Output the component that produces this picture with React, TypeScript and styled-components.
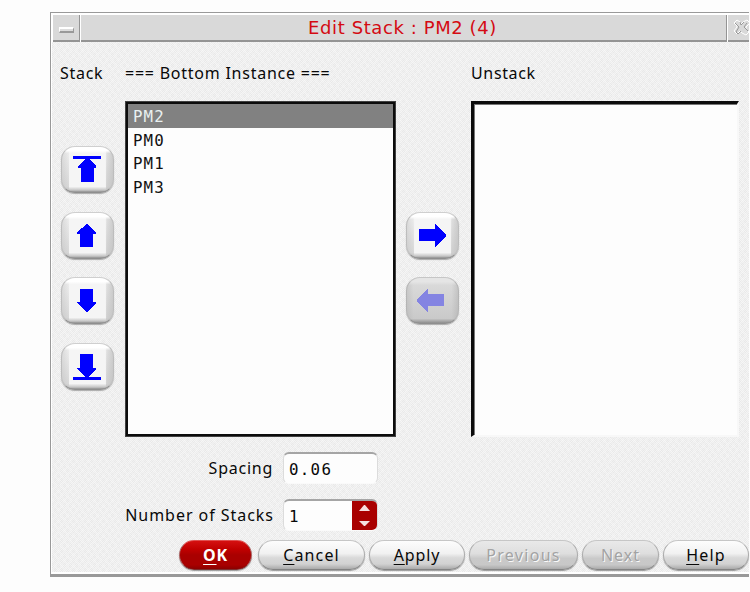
import React from 'react';
import styled, { createGlobalStyle, css } from 'styled-components';

const Global = createGlobalStyle`
  * { box-sizing: border-box; }
  html, body { margin: 0; background: #fdfdfd; overflow: hidden; }
  body { width: 750px; height: 592px; }
  button, input { font: inherit; color: inherit; margin: 0; padding: 0; }
`;

const grain = css`
  background-color: #efefef;
  background-image:
    repeating-conic-gradient(#fafafa44 0 25%, transparent 0 50%),
    repeating-conic-gradient(#e6e6e644 0 25%, transparent 0 50%),
    repeating-conic-gradient(#e9e9e9 0 25%, #f5f5f5 0 50%);
  background-size: 6px 10px, 10px 6px, 2px 2px;
`;

const Page = styled.div`
  padding: 12px 1px 0 50px;
  font: 16px/20px 'Noto Sans', 'Open Sans', sans-serif;
  color: #080808;
`;

const Window = styled.section`
  height: 565px;
  display: flex;
  flex-direction: column;
  border: solid #999;
  border-width: 1px 0 3px 1px;
  box-shadow: inset 1px 1px 0 #fff, inset 0 -2px 0 #fff;
  ${grain}
`;

const TitleBar = styled.header`
  height: 29px;
  padding: 2px 0 0 2px;
  display: grid;
  grid-template-columns: 27px 1fr 21px;
  gap: 1px;
  background: #fff;
`;

const TitleCell = styled.div<{ $last?: boolean }>`
  display: flex;
  align-items: center;
  justify-content: ${p => (p.$last ? 'flex-start' : 'center')};
  overflow: hidden;
  background: #d9d9d9;
  border: solid #949494;
  border-width: 0 ${p => (p.$last ? 0 : 1)}px 2px 0;
`;

const Title = styled.h1`
  margin: 0;
  padding: 0 2px 0 0;
  font: 18px/24px 'DejaVu Sans', sans-serif;
  letter-spacing: 0.59px;
  white-space: pre;
  color: #d40a12;
`;

const MenuMark = styled.span`
  width: 15px;
  height: 6px;
  margin-top: 4px;
  background: #dcdcdc;
  border: solid;
  border-width: 2px 1px;
  border-color: #fff #999 #999 #fff;
`;

const CloseMark = styled.svg`
  flex: none;
  width: 18px;
  height: 17px;
  margin-left: 4px;
`;

const Content = styled.main`
  height: 396px;
  padding: 21px 0 0 9px;
  display: grid;
  grid-template-columns: 65px 271px 75px 268px;
  grid-template-rows: 38px 336px;
`;

const Caption = styled.div<{ $track?: number }>`
  line-height: 20px;
  white-space: pre;
  letter-spacing: ${p => p.$track ?? 0.7}px;
`;

const ButtonColumn = styled.div<{ $top: number; $left: number }>`
  padding: ${p => p.$top}px 0 0 ${p => p.$left}px;
  display: flex;
  flex-direction: column;
  gap: 18.5px;
`;

const ArrowButton = styled.button`
  width: 53px;
  height: 47px;
  flex: none;
  display: block;
  border: 1px solid #c2c2c2;
  border-color: #cfcfcf #bdbdbd #8e8e8e;
  border-radius: 14px;
  background: linear-gradient(#fff 0 8%, transparent 14% 88%, #c4c4c4 96%, #8e8e8e),
    linear-gradient(#fff0, #bbb8) left / 7px 100% no-repeat,
    linear-gradient(#fff0, #bbb8) right / 7px 100% no-repeat,
    linear-gradient(90deg, #dedede, #eee 12%, #f5f5f5 15% 85%, #e2e2e2 88%, #cecece);
  box-shadow: 0 1px 1px #aaa;

  &:disabled {
    border-color: #c6c6c6 #b5b5b5 #8e8e8e;
    background: linear-gradient(#e5e5e5 0 8%, #d8d8d855 16%, #bbbbbb88 90%, #8e8e8e),
      linear-gradient(90deg, #c2c2c2, #dadada 13% 87%, #bcbcbc);
  }
`;

const Glyph = styled.svg`
  display: block;
  width: 51px;
  height: 45px;
`;

const ListBox = styled.ul<{ $open?: boolean }>`
  margin: 0;
  padding: 0;
  list-style: none;
  background: #fdfdfd;
  border: 3px solid #0c0c0c;
  outline: 1px solid #66666699;
  outline-offset: -1px;
  ${p =>
    p.$open &&
    css`
      border-width: 3px 2px 2px 3px;
      border-right-color: #f8f8f8;
      border-bottom-color: #f8f8f8;
      outline: 0;
      box-shadow: inset 1px 1px 0 #777;
    `}
`;

const ListRow = styled.li<{ $selected?: boolean }>`
  height: 23.5px;
  padding: 3px 0 0 5px;
  font: 15.8px/20px 'DejaVu Sans Mono', monospace;
  letter-spacing: 1.1px;
  color: ${p => (p.$selected ? '#e9f0f0' : '#111')};
  background: ${p => (p.$selected ? '#818181' : 'transparent')};
`;

const Fields = styled.div`
  padding: 14px 0 0 73px;
  height: 101px;
  display: grid;
  grid-template-columns: 150px 95px;
  grid-template-rows: 32px 32px;
  row-gap: 15px;
  column-gap: 9px;
  align-items: center;
`;

const FieldName = styled.label<{ $track: number; $inset?: number }>`
  text-align: right;
  white-space: pre;
  padding-right: ${p => p.$inset ?? 0}px;
  letter-spacing: ${p => p.$track}px;
`;

const FieldBox = styled.div`
  height: 32px;
  display: flex;
  overflow: hidden;
  background: #fdfdfd;
  border: 1px solid #dcdcdc;
  border-top: 2px solid #a5a5a5;
  border-bottom-color: #fafafa;
  border-radius: 6px;
`;

const FieldInput = styled.input`
  flex: 1;
  min-width: 0;
  padding: 1px 0 0 5px;
  border: 0;
  outline: 0;
  background: transparent;
  font: 15.8px 'DejaVu Sans Mono', monospace;
  letter-spacing: 1.3px;
`;

const Stepper = styled.button`
  width: 25px;
  border: 0;
  background: #a90000;
`;

const StepperIcon = styled.svg`
  display: block;
  width: 25px;
  height: 29px;
`;

const Footer = styled.footer`
  padding: 1px 0 0 128px;
  display: flex;
`;

const PillButton = styled.button<{ $w: number; $gap?: number; $track: number; $primary?: boolean }>`
  width: ${p => p.$w}px;
  height: 30px;
  flex: none;
  margin-right: ${p => p.$gap ?? 4}px;
  padding-bottom: 1px;
  text-align: center;
  border: 1px solid;
  border-color: #c6c6c6 #aaa #838383;
  border-radius: 15px;
  background: linear-gradient(#fdfdfd, #f1f1f1 45%, #d9d9d9 60%, #d2d2d2 82%, #aaa);
  box-shadow: 0 1px 1px #999;
  letter-spacing: ${p => p.$track}px;

  &:disabled {
    color: #a3a3a3;
    text-shadow: 1px 1px 0 #fafafa;
    background: linear-gradient(#e9e9e9, #dedede 45%, #c9c9c9 62%, #c8c8c8 85%, #aaa);
  }

  ${p =>
    p.$primary &&
    css`
      color: #fff;
      font-weight: 700;
      border-color: #e05050 #a86060 #7c3030;
      background: linear-gradient(#d41010, #c00000 30%, #a90000 50% 85%, #8b0000);
    `}
`;

const Mnemonic = styled.span`
  text-decoration: underline;
  text-decoration-thickness: 1px;
  text-underline-offset: 3px;
  text-decoration-skip-ink: none;
`;

const arrows = {
  top: 'M12 9h28v3H28l7 7v2H33V35H20V21H17v-2l7-7H12z',
  up: 'M26 11l9 8v2H32V34H19V21H16v-2z',
  down: 'M19 11H32V24H35v1l-9 9h-1l-9-9v-1H19z',
  bottom: 'M19 10H32V24H35v1l-8 8H40v3H12v-3H25l-9-8v-1H19z',
  right: 'M13 16H29V11h1L40 22v1L30 34H29V28H13z',
  left: 'M38 16H22V11H21L11 22v1L21 34h1V28H38z',
};

function Arrow({ kind, disabled }: { kind: keyof typeof arrows; disabled?: boolean }) {
  return (
    <ArrowButton disabled={disabled} aria-label={kind}>
      <Glyph viewBox="1 0 51 45" shapeRendering="crispEdges">
        <path d={arrows[kind]} fill={disabled ? '#8484e2' : '#0000fe'} />
      </Glyph>
    </ArrowButton>
  );
}

const instances = ['PM2', 'PM0', 'PM1', 'PM3'];

export default function App() {
  return (
    <Page>
      <Global />
      <Window>
        <TitleBar>
          <TitleCell><MenuMark /></TitleCell>
          <TitleCell><Title>Edit Stack : PM2 (4)</Title></TitleCell>
          <TitleCell $last>
            <CloseMark viewBox="0 0 18 17" fill="none">
              <path d="M5 1l3 2 1 2 2-2 4-2 3 3-4 4v2l3 3-3 3-4-2-2-2-3 3-3-3 3-4V7L2 4z" stroke="#fff" />
              <path d="M3 4l4 4-3 5 2 2 3-3M8 3l1 3 3-3M15 4l-3 4 4 4" stroke="#999" />
            </CloseMark>
          </TitleCell>
        </TitleBar>
        <Content>
          <Caption>Stack</Caption>
          <Caption $track={0.76}>=== Bottom Instance ===</Caption>
          <span />
          <Caption $track={0.65}>Unstack</Caption>
          <ButtonColumn $top={45} $left={0.5}>
            <Arrow kind="top" />
            <Arrow kind="up" />
            <Arrow kind="down" />
            <Arrow kind="bottom" />
          </ButtonColumn>
          <ListBox>
            {instances.map((name, i) => (
              <ListRow key={name} $selected={i === 0}>{name}</ListRow>
            ))}
          </ListBox>
          <ButtonColumn $top={110.5} $left={10}>
            <Arrow kind="right" />
            <Arrow kind="left" disabled />
          </ButtonColumn>
          <ListBox $open />
        </Content>
        <Fields>
          <FieldName $track={0.75} $inset={1}>Spacing</FieldName>
          <FieldBox><FieldInput defaultValue="0.06" /></FieldBox>
          <FieldName $track={0.96}>Number of Stacks</FieldName>
          <FieldBox>
            <FieldInput defaultValue="1" />
            <Stepper aria-label="Step">
              <StepperIcon viewBox="0 0 25 29">
                <path d="M7 10l5-6h1l5 6z" fill="#f5dede" />
                <path d="M7 20h11l-5 5h-1z" fill="#f5dede" />
              </StepperIcon>
            </Stepper>
          </FieldBox>
        </Fields>
        <Footer>
          <PillButton $w={73} $gap={6} $track={0.8} $primary><Mnemonic>O</Mnemonic>K</PillButton>
          <PillButton $w={107} $track={1.15}><Mnemonic>C</Mnemonic>ancel</PillButton>
          <PillButton $w={96} $track={0.9}><Mnemonic>A</Mnemonic>pply</PillButton>
          <PillButton $w={109} $track={1.3} disabled>Previous</PillButton>
          <PillButton $w={77} $track={1} disabled>Next</PillButton>
          <PillButton $w={86} $gap={0} $track={1.2}><Mnemonic>H</Mnemonic>elp</PillButton>
        </Footer>
      </Window>
    </Page>
  );
}
